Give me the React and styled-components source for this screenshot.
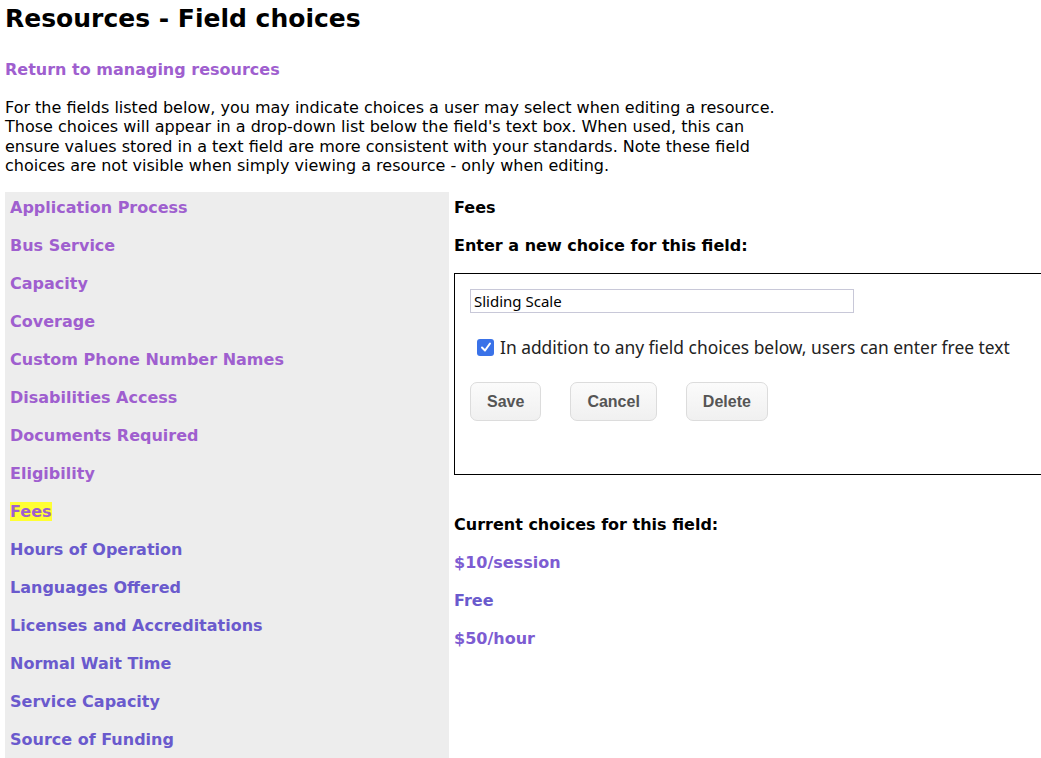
import React from "react";
import styled, { createGlobalStyle } from "styled-components";

const Global = createGlobalStyle`
  html, body { margin: 0; padding: 0; background: #fff; overflow: hidden; }
  body { font-family: "DejaVu Sans", Verdana, sans-serif; font-size: 16px; color: #000; }
`;

const Page = styled.div`
  padding: 0 5px;
  width: 1100px;
`;

const Title = styled.h1`
  margin: 3px 0 0;
  font-size: 25px;
  line-height: 32px;
  font-weight: bold;
`;

const BackLink = styled.a`
  display: block;
  margin-top: 25px;
  font-weight: bold;
  color: #9f5fcf;
  text-decoration: none;
  line-height: 20px;
`;

const Intro = styled.p`
  margin: 18px 0 0;
  line-height: 19.3px;
`;

const Layout = styled.div`
  display: flex;
  margin-top: 17px;
  align-items: flex-start;
`;

const Sidebar = styled.ul`
  list-style: none;
  margin: 0;
  padding: 0 0 4px 5px;
  width: 439px;
  background: #ededed;
  flex: none;
`;

const FieldItem = styled.li`
  height: 38px;
  box-sizing: border-box;
  padding-top: 6px;
  line-height: 20px;
`;

const FieldLink = styled.a`
  font-weight: bold;
  text-decoration: none;
  color: ${(p) => (p.$visited ? "#9f5fcf" : "#6a5acd")};
  background: ${(p) => (p.$active ? "#ffff33" : "transparent")};
`;

const Main = styled.div`
  padding-left: 5px;
  flex: 1;
`;

const Label = styled.div`
  font-weight: bold;
  height: 38px;
  box-sizing: border-box;
  padding-top: 6px;
  line-height: 20px;
`;

const EditBox = styled.div`
  margin: 5px 0 34px;
  border: 1px solid #000;
  width: 620px;
  height: 202px;
  padding: 15px;
  box-sizing: border-box;
`;

const TextInput = styled.input`
  display: block;
  width: 384px;
  height: 24px;
  box-sizing: border-box;
  border: 1px solid #c8c8d8;
  padding: 1px 3px;
  font-family: "Noto Sans", "Open Sans", sans-serif;
  font-size: 15px;
  color: #000;
  outline: none;
`;

const CheckRow = styled.label`
  display: flex;
  align-items: center;
  height: 20px;
  margin: 24px 0 0 7px;
  font-family: "Noto Sans", "Open Sans", sans-serif;
  font-size: 17.4px;
  line-height: 20px;
  color: #222;
`;

const Check = styled.span`
  width: 17px;
  height: 17px;
  border-radius: 3px;
  background: #3a72e8;
  margin-right: 6px;
  display: inline-flex;
  align-items: center;
  justify-content: center;
  flex: none;
`;

const Buttons = styled.div`
  display: flex;
  gap: 29px;
  margin-top: 25px;
`;

const Button = styled.button`
  height: 39px;
  padding: 0 16px;
  border: 1px solid #dcdcdc;
  border-radius: 7px;
  background: linear-gradient(#fbfbfb, #f0f0f0);
  font-family: "Liberation Sans", Arial, sans-serif;
  font-weight: bold;
  font-size: 16px;
  color: #555;
`;

const ChoiceLink = styled.a`
  display: block;
  height: 38px;
  box-sizing: border-box;
  padding-top: 6px;
  line-height: 20px;
  font-weight: bold;
  text-decoration: none;
  color: ${(p) => p.$color};
`;

const fields = [
  ["Application Process", true],
  ["Bus Service", true],
  ["Capacity", true],
  ["Coverage", true],
  ["Custom Phone Number Names", true],
  ["Disabilities Access", true],
  ["Documents Required", true],
  ["Eligibility", true],
  ["Fees", true, true],
  ["Hours of Operation"],
  ["Languages Offered"],
  ["Licenses and Accreditations"],
  ["Normal Wait Time"],
  ["Service Capacity"],
  ["Source of Funding"],
];

const choices = [
  ["$10/session", "#7d5cd2"],
  ["Free", "#6a5acd"],
  ["$50/hour", "#7d5cd2"],
];

export default function App() {
  return (
    <Page>
      <Global />
      <Title>Resources - Field choices</Title>
      <BackLink href="#">Return to managing resources</BackLink>
      <Intro>
        For the fields listed below, you may indicate choices a user may select when editing a resource.
        <br />
        Those choices will appear in a drop-down list below the field's text box. When used, this can
        <br />
        ensure values stored in a text field are more consistent with your standards. Note these field
        <br />
        choices are not visible when simply viewing a resource - only when editing.
      </Intro>
      <Layout>
        <Sidebar>
          {fields.map(([name, visited, active]) => (
            <FieldItem key={name}>
              <FieldLink href="#" $visited={visited} $active={active}>
                {name}
              </FieldLink>
            </FieldItem>
          ))}
        </Sidebar>
        <Main>
          <Label>Fees</Label>
          <Label>Enter a new choice for this field:</Label>
          <EditBox>
            <TextInput defaultValue="Sliding Scale" />
            <CheckRow>
              <Check>
                <svg width="12" height="12" viewBox="0 0 12 12">
                  <path d="M2 6.5 L5 9.5 L10 2.5" stroke="#fff" strokeWidth="2" fill="none" strokeLinecap="round" strokeLinejoin="round" />
                </svg>
              </Check>
              In addition to any field choices below, users can enter free text
            </CheckRow>
            <Buttons>
              <Button>Save</Button>
              <Button>Cancel</Button>
              <Button>Delete</Button>
            </Buttons>
          </EditBox>
          <Label>Current choices for this field:</Label>
          {choices.map(([c, color]) => (
            <ChoiceLink key={c} href="#" $color={color}>
              {c}
            </ChoiceLink>
          ))}
        </Main>
      </Layout>
    </Page>
  );
}
